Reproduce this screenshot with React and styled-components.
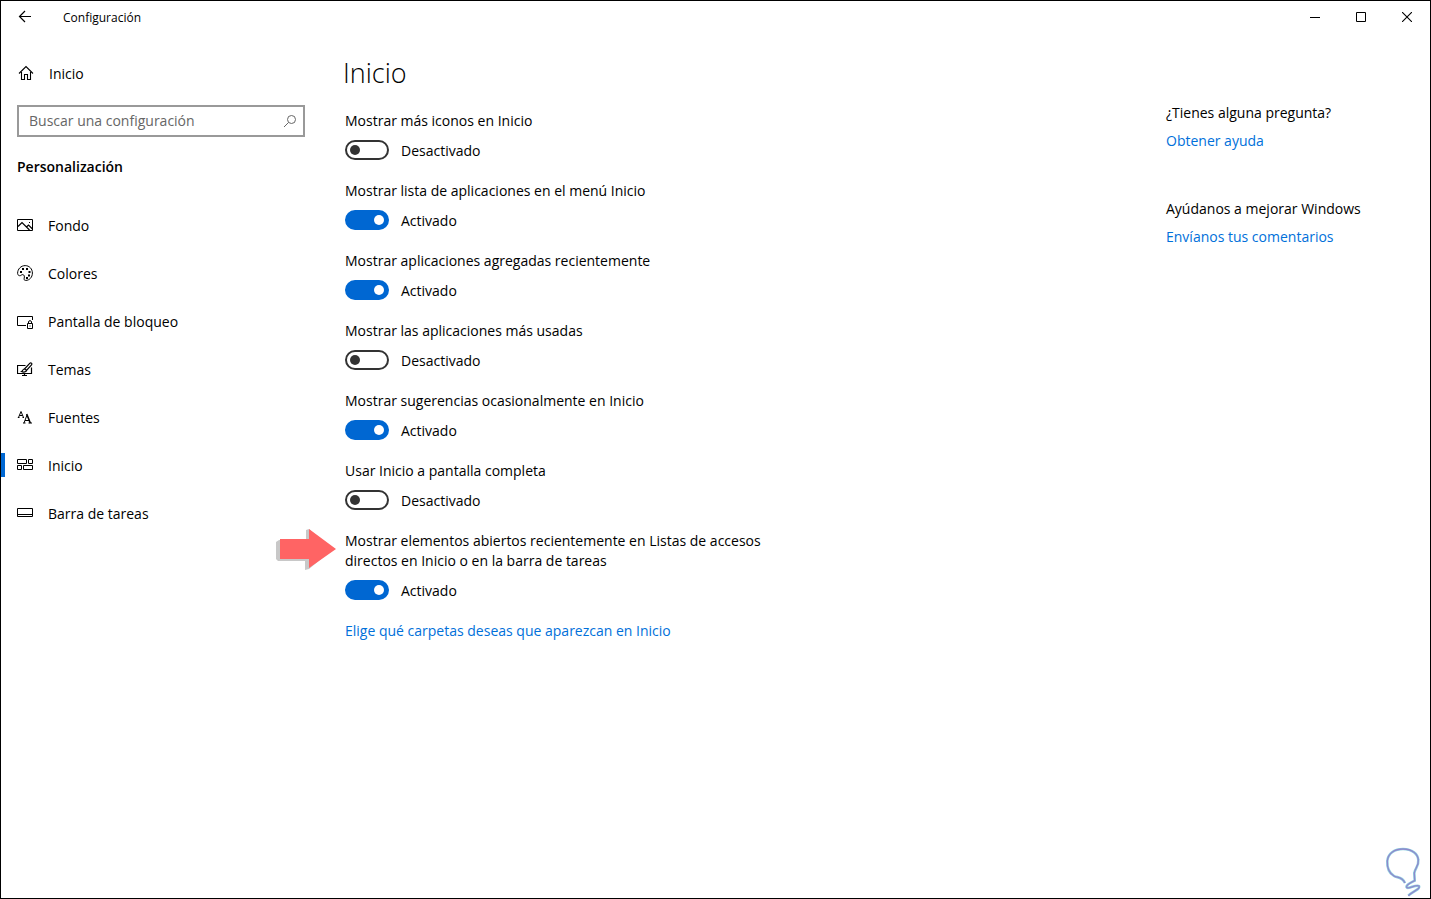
import React, { useState } from "react";
import styled, { createGlobalStyle } from "styled-components";

const GlobalStyle = createGlobalStyle`
  * {
    box-sizing: border-box;
  }

  body {
    margin: 0;
    background-color: white;
    color: black;
    font-family: "Open Sans", "Noto Sans", sans-serif;
    font-size: 14px;
    line-height: 20px;
  }

  button,
  input {
    font: inherit;
    color: inherit;
  }

  svg {
    display: block;
    flex: none;
    fill: none;
    stroke: currentColor;
  }
`;

const Window = styled.div`
  position: relative;
  display: flex;
  flex-direction: column;
  min-height: 100vh;
  border: 1px solid black;
`;

const TitleBar = styled.header`
  display: flex;
  align-items: center;
  height: 32px;
  font-size: 12px;
`;

const TitleButton = styled.button`
  display: flex;
  align-items: center;
  justify-content: center;
  width: ${(p) => (p.$back ? "48px" : "46px")};
  height: 32px;
  padding: 0;
  border: 0;
  background: none;
`;

const WindowTitle = styled.div`
  flex: 1;
  padding: 2px 0 0 14px;
`;

const Columns = styled.div`
  display: flex;
  flex: 1;
`;

const Sidebar = styled.aside`
  width: 320px;
  padding-top: 16px;
`;

const NavLink = styled.a`
  display: flex;
  align-items: center;
  gap: 15px;
  height: ${(p) => (p.$home ? "48px" : "24px")};
  padding-left: ${(p) => (p.$active ? "12px" : "16px")};
  border-left: ${(p) => (p.$active ? "4px solid #0067d2" : "0")};
  color: black;
  text-decoration: none;

  span {
    padding-top: 2px;
  }
`;

const SearchBox = styled.div`
  display: flex;
  align-items: center;
  height: 32px;
  margin: 8px 16px 0;
  border: 2px solid #999;
  color: #666;

  input {
    flex: 1;
    min-width: 0;
    padding: 0 10px;
    border: 0;
    outline: 0;
    background: none;
  }

  input::placeholder {
    color: #666;
    opacity: 1;
  }

  button {
    padding: 0 6px;
    border: 0;
    background: none;
  }
`;

const SectionName = styled.h2`
  margin: 20px 16px 36px;
  font-size: 14px;
  font-weight: 600;
`;

const NavList = styled.ul`
  display: flex;
  flex-direction: column;
  gap: 24px;
  margin: 0;
  padding: 0;
  list-style: none;
`;

const Content = styled.main`
  flex: 1;
  padding: 20px 24px;
`;

const PageTitle = styled.h1`
  margin: 0 0 18px -2px;
  font-size: 27px;
  font-weight: 300;
  line-height: 40px;
`;

const Setting = styled.div`
  position: relative;
  max-width: 430px;
  margin-bottom: 20px;

  > label {
    display: block;
  }
`;

const ToggleRow = styled.div`
  display: flex;
  align-items: center;
  gap: 12px;
  margin-top: 8px;

  span {
    padding-top: 2px;
  }
`;

const Toggle = styled.input`
  appearance: none;
  display: flex;
  align-items: center;
  width: 44px;
  height: 20px;
  margin: 0;
  padding: 0 3px;
  border: 2px solid #333;
  border-radius: 10px;

  &::before {
    content: "";
    width: 10px;
    height: 10px;
    border-radius: 50%;
    background-color: #333;
  }

  &:checked {
    justify-content: flex-end;
    border-color: #0067d2;
    background-color: #0067d2;
  }

  &:checked::before {
    background-color: white;
  }
`;

const Link = styled.a`
  color: #0070da;
  text-decoration: none;
`;

const Help = styled.aside`
  width: 264px;
  padding-top: 70px;

  section {
    display: flex;
    flex-direction: column;
    align-items: flex-start;
    gap: 8px;
    margin-bottom: 48px;
  }
`;

const Pointer = styled.svg`
  position: absolute;
  left: -70px;
  top: -3px;
`;

const Watermark = styled.svg`
  position: absolute;
  right: 8px;
  bottom: -1px;
`;

const BackIcon = () => (
  <svg width="14" height="14" viewBox="0 0 14 14">
    <path d="M13 6.5H1.5M7 1L1.5 6.5L7 12" strokeWidth="1.2" />
  </svg>
);

const HomeIcon = () => (
  <svg width="17" height="16" viewBox="0 0 17 16">
    <path d="M2 8.5L9 1.5L16 8.5M4.5 7V14.5H7.5V9.5H10.5V14.5H13.5V7" strokeWidth="1.1" />
  </svg>
);

const SearchIcon = () => (
  <svg width="14" height="14" viewBox="0 0 14 14">
    <circle cx="8.5" cy="5.5" r="4" />
    <path d="M5.5 8.5L1 13" />
  </svg>
);

const ICONS = {
  picture: (
    <>
      <path d="M.5 2.5H15.5V13.5H.5Z" />
      <path d="M1 9.5L5 5.5L12.5 13M9.5 10L11.5 8L15.5 12" strokeWidth="1.2" />
      <path d="M12 5.5H13" />
    </>
  ),
  palette: (
    <>
      <path d="M.6 8.3C.6 4 4 .6 8.2 .6C12.4 .6 15.4 4 15.4 8C15.4 12.3 12.5 15.4 8.7 15.4C7.2 15.4 6.8 14.5 7.2 13.2C7.7 11.5 7.3 9.8 5.8 9.6C4.5 9.4 3.9 11 2.5 10.7C1.2 10.4 .6 9.5 .6 8.3Z" />
      <path
        d="M3 6H5V8H3ZM5 3H7V5H5ZM9 3H11V5H9ZM11.5 6H13.5V8H11.5ZM11 9.5H13V11.5H11ZM9 12H11V14H9Z"
        fill="currentColor"
        stroke="none"
      />
    </>
  ),
  lock: (
    <>
      <path d="M9 12.5H.5V3.5H15.5V7" />
      <path d="M10.5 10.5H15.5V15.5H10.5ZM11.5 10.5V9C11.5 7.2 14.5 7.2 14.5 9V10.5" />
      <path d="M13 12.5V13.5" />
    </>
  ),
  themes: (
    <>
      <path d="M8.5 4.5H.5V12.5H14.5V6.5M7.5 13V15M5 14.5H10" strokeWidth="1.2" />
      <path d="M7.5 8L12.7 2.3C13.9 1.1 15.6 2.5 14.5 3.8L9.5 9.5Z" strokeWidth="1.2" />
      <path d="M7.5 8C5.8 7.8 5.8 10 4.5 10.5C6.5 11.5 9.5 11 9.5 9.5" strokeWidth="1.2" />
    </>
  ),
  fonts: (
    <>
      <path d="M1.5 8.5L4 2.5L6.5 8.5M2.5 6.5H5.5M.8 8.5H2.5M5.5 8.5H7" />
      <path d="M7 14L10 6M8 11.5H12M6 14H8.5M11.5 14H15" />
      <path d="M9.7 5L13.3 14" strokeWidth="1.6" />
    </>
  ),
  tiles: (
    <path d="M.5 2.5H9.5V6.5H.5ZM11.5 2.5H15.5V6.5H11.5ZM.5 8.5H4.5V12.5H.5ZM6.5 8.5H15.5V12.5H6.5Z" />
  ),
  taskbar: <path d="M.5 3.5H15.5V11.5H.5ZM1 9.5H15" />,
};

const NavIcon = ({ name }) => (
  <svg width="16" height="16" viewBox="0 0 16 16">
    {ICONS[name]}
  </svg>
);

const BULB =
  "M21 36C18 29 13 31 10 29C5 26 3 20 3.300 14C4 6 11 2 19 2C28 2 34 7 34.300 13C35 19 31 21 30.300 26L30.700 33.700C26 36 22 38 22.500 40C23.500 43 32 37 35 39C37 42 29 44 24.300 48.700";

const navItems = [
  { label: "Fondo", icon: "picture" },
  { label: "Colores", icon: "palette" },
  { label: "Pantalla de bloqueo", icon: "lock" },
  { label: "Temas", icon: "themes" },
  { label: "Fuentes", icon: "fonts" },
  { label: "Inicio", icon: "tiles" },
  { label: "Barra de tareas", icon: "taskbar" },
];

const initialSettings = [
  { key: "icons", label: "Mostrar más iconos en Inicio", on: false },
  { key: "list", label: "Mostrar lista de aplicaciones en el menú Inicio", on: true },
  { key: "added", label: "Mostrar aplicaciones agregadas recientemente", on: true },
  { key: "used", label: "Mostrar las aplicaciones más usadas", on: false },
  { key: "tips", label: "Mostrar sugerencias ocasionalmente en Inicio", on: true },
  { key: "full", label: "Usar Inicio a pantalla completa", on: false },
  {
    key: "recent",
    label:
      "Mostrar elementos abiertos recientemente en Listas de accesos directos en Inicio o en la barra de tareas",
    on: true,
    pointed: true,
  },
];

const App = () => {
  const [settings, setSettings] = useState(initialSettings);
  const [query, setQuery] = useState("");

  const toggle = (key) => {
    setSettings(settings.map((s) => (s.key === key ? { ...s, on: !s.on } : s)));
  };

  return (
    <Window>
      <GlobalStyle />
      <TitleBar>
        <TitleButton $back aria-label="Atrás">
          <BackIcon />
        </TitleButton>
        <WindowTitle>Configuración</WindowTitle>
        <TitleButton aria-label="Minimizar">
          <svg width="10" height="10" viewBox="0 0 10 10">
            <path d="M0 5.5H10" />
          </svg>
        </TitleButton>
        <TitleButton aria-label="Maximizar">
          <svg width="10" height="10" viewBox="0 0 10 10">
            <path d="M.5 .5H9.5V9.5H.5Z" />
          </svg>
        </TitleButton>
        <TitleButton aria-label="Cerrar">
          <svg width="10" height="10" viewBox="0 0 10 10">
            <path d="M0 0L10 10M10 0L0 10" strokeWidth="1.1" />
          </svg>
        </TitleButton>
      </TitleBar>
      <Columns>
        <Sidebar>
          <NavLink href="#home" $home>
            <HomeIcon />
            <span>Inicio</span>
          </NavLink>
          <SearchBox>
            <input
              type="text"
              aria-label="Buscar una configuración"
              placeholder="Buscar una configuración"
              value={query}
              onChange={(e) => setQuery(e.target.value)}
            />
            <button aria-label="Buscar">
              <SearchIcon />
            </button>
          </SearchBox>
          <SectionName>Personalización</SectionName>
          <NavList>
            {navItems.map((item) => (
              <li key={item.icon}>
                <NavLink href={`#${item.icon}`} $active={item.icon === "tiles"}>
                  <NavIcon name={item.icon} />
                  <span>{item.label}</span>
                </NavLink>
              </li>
            ))}
          </NavList>
        </Sidebar>
        <Content>
          <PageTitle>Inicio</PageTitle>
          {settings.map((s) => (
            <Setting key={s.key}>
              <label htmlFor={s.key}>{s.label}</label>
              <ToggleRow>
                <Toggle
                  type="checkbox"
                  role="switch"
                  id={s.key}
                  checked={s.on}
                  onChange={() => toggle(s.key)}
                />
                <span>{s.on ? "Activado" : "Desactivado"}</span>
              </ToggleRow>
              {s.pointed && (
                <Pointer width="62" height="44" viewBox="0 0 62 44">
                  <path
                    d="M1 14L4 12H31V2L34 1L57 22L34 41L30 42V33H3L1 31Z"
                    fill="#c8c8c8"
                    stroke="none"
                  />
                  <path d="M5 11H34V1L61 21L34 40V31H5Z" fill="#ff6464" stroke="none" />
                </Pointer>
              )}
            </Setting>
          ))}
          <Link href="#folders">Elige qué carpetas deseas que aparezcan en Inicio</Link>
        </Content>
        <Help>
          <section>
            <span>¿Tienes alguna pregunta?</span>
            <Link href="#help">Obtener ayuda</Link>
          </section>
          <section>
            <span>Ayúdanos a mejorar Windows</span>
            <Link href="#feedback">Envíanos tus comentarios</Link>
          </section>
        </Help>
      </Columns>
      <Watermark width="38" height="52" viewBox="0 0 38 52">
        <path d={BULB} stroke="#8fd0e0" strokeWidth="2.6" />
        <path d={BULB} stroke="#8f88cc" strokeWidth="1.3" />
      </Watermark>
    </Window>
  );
};

export default App;
